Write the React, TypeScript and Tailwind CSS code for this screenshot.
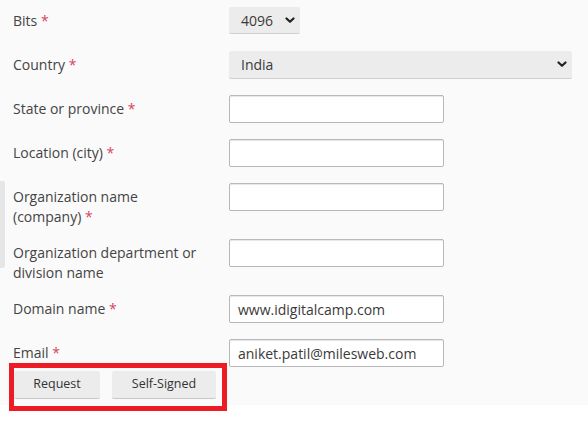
import React from "react";

const Star = () => <span className="text-[#d9435e]"> *</span>;

const Chevron = () => (
  <svg width="10" height="7" viewBox="0 0 10 7" className="shrink-0">
    <path d="M1.5 1.5 L5 4.8 L8.5 1.5" fill="none" stroke="#222" strokeWidth="2.2" strokeLinecap="round" strokeLinejoin="round" />
  </svg>
);

function Row({ h, label, children }: { h: string; label: React.ReactNode; children: React.ReactNode }) {
  return (
    <div className={`flex items-start ${h}`}>
      <div className="w-[216px] shrink-0 pt-[4px] leading-5 text-[14px] text-[#444]">{label}</div>
      {children}
    </div>
  );
}

function TextInput({ value = "" }: { value?: string }) {
  return (
    <div className="w-[215px] h-[28px] bg-white border border-[#b8b8b8] rounded-[2px] shadow-[inset_0_2px_1px_-1px_#e6e6e6] flex items-center pl-[8px] text-[14px] text-[#3a3a3a]">
      {value}
    </div>
  );
}

export default function App() {
  return (
    <div className="relative w-[588px] h-[424px] bg-white font-['Open_Sans',sans-serif] overflow-hidden">
      <div className="h-[405px] bg-[#fafafa] pt-[7px] pl-[13px]">
        <Row h="h-[44px]" label={<>Bits<Star /></>}>
          <div className="w-[71px] h-[27px] bg-[#ececec] rounded-[2px] border-b border-[#cfcfcf] flex items-center justify-between pl-[12px] pr-[5px] text-[14px] text-[#3a3a3a]">
            <span>4096</span>
            <Chevron />
          </div>
        </Row>
        <Row h="h-[44px]" label={<>Country<Star /></>}>
          <div className="w-[343px] h-[28px] bg-[#ececec] rounded-[2px] border-b border-[#cfcfcf] flex items-center justify-between pl-[12px] pr-[5px] text-[14px] text-[#3a3a3a]">
            <span>India</span>
            <Chevron />
          </div>
        </Row>
        <Row h="h-[44px]" label={<>State or province<Star /></>}>
          <TextInput />
        </Row>
        <Row h="h-[44px]" label={<>Location (city)<Star /></>}>
          <TextInput />
        </Row>
        <Row h="h-[56px]" label={<>Organization name<br />(company)<Star /></>}>
          <TextInput />
        </Row>
        <Row h="h-[56px]" label={<>Organization department or<br />division name</>}>
          <TextInput />
        </Row>
        <Row h="h-[44px]" label={<>Domain name<Star /></>}>
          <TextInput value="www.idigitalcamp.com" />
        </Row>
        <Row h="h-[32px]" label={<>Email<Star /></>}>
          <TextInput value="aniket.patil@milesweb.com" />
        </Row>
        <div className="flex gap-[12px] pl-[1px]">
          <button className="w-[86px] h-[28px] bg-[#ececec] rounded-[2px] border-b border-[#c8c8c8] text-[12.5px] text-[#333] font-['Open_Sans',sans-serif]">
            Request
          </button>
          <button className="w-[104px] h-[28px] bg-[#ececec] rounded-[2px] border-b border-[#c8c8c8] text-[12.5px] text-[#333] font-['Open_Sans',sans-serif]">
            Self-Signed
          </button>
        </div>
      </div>
      <div className="absolute left-0 top-[181px] w-[5px] h-[87px] bg-[#e6e6e6] rounded-r-[2px]" />
      <div className="absolute left-[9px] top-[363px] w-[218px] h-[48px] border-[5px] border-[#ed1c24]" />
    </div>
  );
}
